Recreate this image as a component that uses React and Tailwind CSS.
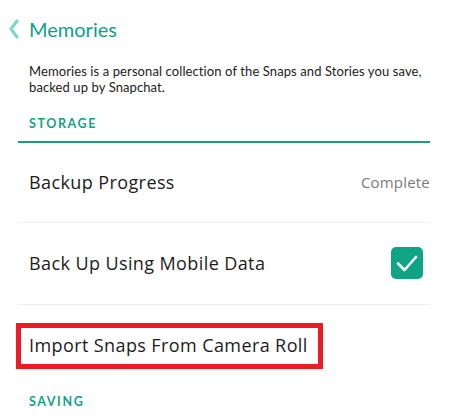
import React from "react";

const font = { fontFamily: "Lato, 'Open Sans', sans-serif" };
const rowFont = { fontFamily: "'Open Sans', Lato, sans-serif" };

const Chevron = () => (
  <svg width="12" height="20" viewBox="0 0 12 20" className="shrink-0">
    <polyline
      points="9,2 3,10 9,18"
      fill="none"
      stroke="#7fd6c2"
      strokeWidth="3.2"
      strokeLinecap="round"
      strokeLinejoin="round"
    />
  </svg>
);

const CheckBox = () => (
  <div className="w-[32px] h-[32px] rounded-[5px] bg-[#0fa584] flex items-center justify-center">
    <svg width="24" height="24" viewBox="0 0 24 24">
      <polyline
        points="3,12.5 9.5,19 21,6"
        fill="none"
        stroke="#fff"
        strokeWidth="2.6"
        strokeLinecap="round"
        strokeLinejoin="round"
      />
    </svg>
  </div>
);

const SectionTitle = ({ children }) => (
  <p className="pl-[11px] text-[12.5px] font-bold tracking-[1.6px] text-[#10a386] leading-none">
    {children}
  </p>
);

export default function App() {
  return (
    <div className="w-[450px] h-[415px] bg-white overflow-hidden text-[#1c1c1c]" style={font}>
      {/* header */}
      <div className="h-[57px] flex items-center gap-[9px] pl-[8px]">
        <Chevron />
        <h1 className="text-[20px] text-[#0e9f84] leading-none">Memories</h1>
      </div>

      <div className="pl-[18px] pr-[20px]">
        <p className="pl-[11px] text-[13px] tracking-[0.1px] leading-[16px] text-[#222] pt-[6px]">
          Memories is a personal collection of the Snaps and Stories you save,
          backed up by Snapchat.
        </p>

        <div className="pt-[23px] pb-[10px]">
          <SectionTitle>STORAGE</SectionTitle>
        </div>
        <div className="h-[2px] bg-[#1e9a80]" />

        {/* rows */}
        <div className="h-[79px] flex items-center justify-between pl-[11px]" style={rowFont}>
          <span className="text-[18px] tracking-[0.4px]">Backup Progress</span>
          <span className="text-[15px] tracking-[0.2px] text-[#7a7a7a]">Complete</span>
        </div>
        <div className="h-px bg-[#efefef]" />
        <div className="h-[81px] flex items-center justify-between pl-[11px] pr-[7px]" style={rowFont}>
          <span className="text-[18px] tracking-[0.4px]">Back Up Using Mobile Data</span>
          <CheckBox />
        </div>
        <div className="h-px bg-[#efefef]" />

        <div className="pt-[18px] -ml-[2px]" style={rowFont}>
          <div className="inline-flex items-center h-[46px] w-[307px] border-[5px] border-[#ec1c24] pl-[8px]">
            <span className="text-[18px] tracking-[0.4px] whitespace-nowrap">Import Snaps From Camera Roll</span>
          </div>
        </div>

        <div className="pt-[27px]">
          <SectionTitle>SAVING</SectionTitle>
        </div>
      </div>
    </div>
  );
}
